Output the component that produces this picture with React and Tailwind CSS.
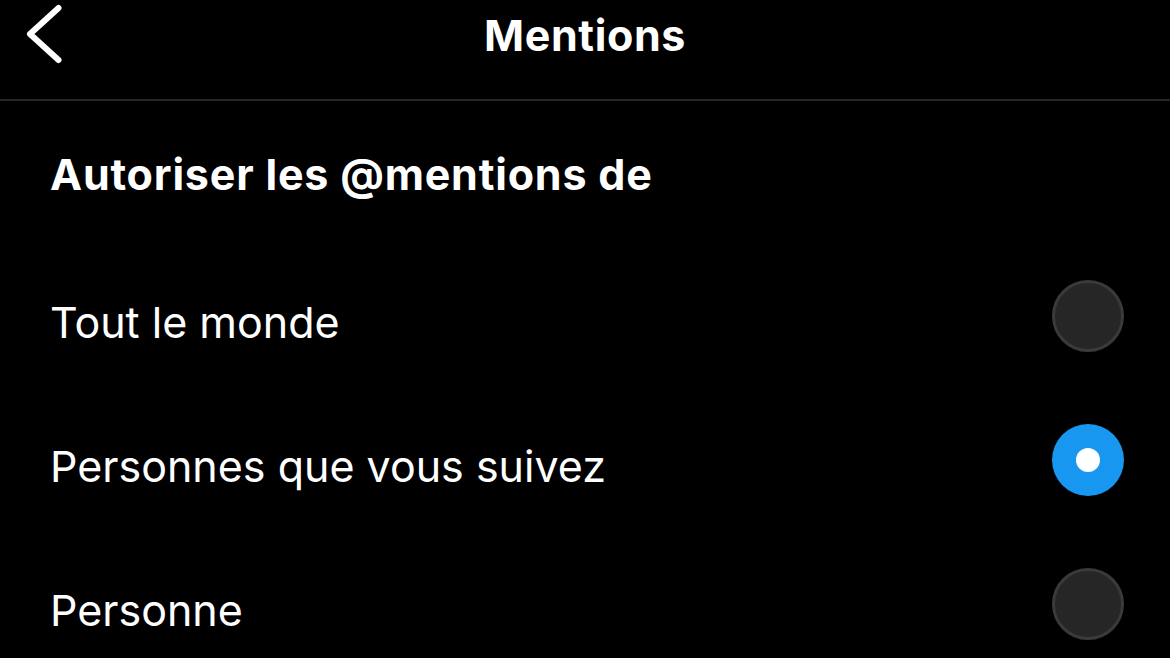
import { useState } from "react";

const options = ["Tout le monde", "Personnes que vous suivez", "Personne"];

const Radio = ({ checked }) =>
  checked ? (
    <div className="size-[72px] rounded-full bg-[#1897f1] flex items-center justify-center">
      <div className="size-[24px] rounded-full bg-white" />
    </div>
  ) : (
    <div className="size-[72px] rounded-full bg-[#262626] border-[3px] border-[#3a3a3a]" />
  );

export default function App() {
  const [selected, setSelected] = useState(1);

  return (
    <div
      className="w-[1170px] h-[658px] bg-black text-white overflow-hidden flex flex-col"
      style={{ fontFamily: "Inter, 'Noto Sans', sans-serif" }}
    >
      <div className="relative h-[101px] flex items-center justify-center border-b-2 border-[#262626] shrink-0">
        <button className="absolute left-[26px] top-[4px]">
          <svg width="40" height="60" viewBox="0 0 40 60" fill="none">
            <path
              d="M32.5 4 L4 30 L32.5 56"
              stroke="white"
              strokeWidth="6"
              strokeLinecap="round"
              strokeLinejoin="round"
            />
          </svg>
        </button>
        <h1 className="text-[43px] font-bold tracking-[0.6px] -mt-[29px]">Mentions</h1>
      </div>

      <div className="h-[143px] flex items-center px-[50px] shrink-0">
        <h2 className="text-[43px] font-bold tracking-[0.8px] mt-[4px]">Autoriser les @mentions de</h2>
      </div>

      {options.map((label, idx) => (
        <div
          key={label}
          className="h-[144px] flex items-center justify-between pl-[50px] pr-[46px] shrink-0 cursor-pointer"
          onClick={() => setSelected(idx)}
        >
          <span className="text-[43px] font-normal mt-[12px]">{label}</span>
          <Radio checked={selected === idx} />
        </div>
      ))}
    </div>
  );
}
